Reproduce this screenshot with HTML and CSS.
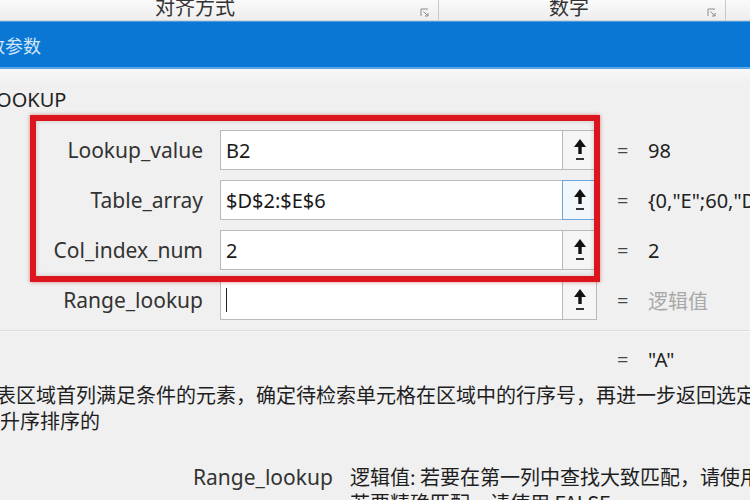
FILE: index.html
```html
<!DOCTYPE html>
<html lang="zh-CN">
<head>
<meta charset="utf-8">
<title>函数参数</title>
<link rel="stylesheet" href="styles.css">
</head>
<body>
<div class="ribbon">
  <div class="rgroup g1">
    <span class="rlabel">对齐方式</span>
    <svg class="launcher" viewBox="0 0 10 10" width="10" height="10"><path d="M1 8V1H8" fill="none" stroke="#8c8c8c" stroke-width="1"/><path d="M3.5 3.5L8 8M8 5V8H5" fill="none" stroke="#8c8c8c" stroke-width="1"/></svg>
  </div>
  <div class="rgroup g2">
    <span class="rlabel">数字</span>
    <svg class="launcher" viewBox="0 0 10 10" width="10" height="10"><path d="M1 8V1H8" fill="none" stroke="#8c8c8c" stroke-width="1"/><path d="M3.5 3.5L8 8M8 5V8H5" fill="none" stroke="#8c8c8c" stroke-width="1"/></svg>
  </div>
  <div class="rgroup g3"></div>
</div>

<div class="titlebar"><span class="title">函数参数</span></div>

<div class="dialog">
  <div class="fname">VLOOKUP</div>

  <div class="args">
    <div class="row">
      <span class="lbl">Lookup_value</span>
      <div class="box"><span class="val">B2</span></div>
      <div class="pick"><svg viewBox="0 0 14 26" width="14" height="26"><path d="M7 2L1 10H5.3V17H8.7V10H13Z" fill="#111"/><rect x="3" y="21" width="8" height="2" fill="#333"/></svg></div>
      <span class="eq">=</span>
      <span class="res">98</span>
    </div>
    <div class="row">
      <span class="lbl">Table_array</span>
      <div class="box"><span class="val">$D$2:$E$6</span></div>
      <div class="pick focus"><svg viewBox="0 0 14 26" width="14" height="26"><path d="M7 2L1 10H5.3V17H8.7V10H13Z" fill="#111"/><rect x="3" y="21" width="8" height="2" fill="#333"/></svg></div>
      <span class="eq">=</span>
      <span class="res">{0,"E";60,"D";70,"C";80,"B";90,"A"}</span>
    </div>
    <div class="row">
      <span class="lbl">Col_index_num</span>
      <div class="box"><span class="val">2</span></div>
      <div class="pick"><svg viewBox="0 0 14 26" width="14" height="26"><path d="M7 2L1 10H5.3V17H8.7V10H13Z" fill="#111"/><rect x="3" y="21" width="8" height="2" fill="#333"/></svg></div>
      <span class="eq">=</span>
      <span class="res">2</span>
    </div>
    <div class="row">
      <span class="lbl">Range_lookup</span>
      <div class="box"><span class="caret"></span></div>
      <div class="pick"><svg viewBox="0 0 14 26" width="14" height="26"><path d="M7 2L1 10H5.3V17H8.7V10H13Z" fill="#111"/><rect x="3" y="21" width="8" height="2" fill="#333"/></svg></div>
      <span class="eq">=</span>
      <span class="res muted">逻辑值</span>
    </div>
    <div class="highlight"></div>
  </div>

  <div class="sep"></div>

  <div class="result"><span class="eq">=</span><span class="res">"A"</span></div>

  <div class="desc">
    <div class="dline first">搜索表区域首列满足条件的元素，确定待检索单元格在区域中的行序号，再进一步返回选定单元格的值。默认情况下，表是以</div>
    <div class="dline">升序排序的</div>
  </div>

  <div class="argdesc">
    <span class="alabel">Range_lookup</span>
    <div class="atext">
      <div class="aline">逻辑值: 若要在第一列中查找大致匹配，请使用 TRUE 或省略；</div>
      <div class="aline">若要精确匹配，请使用 FALSE</div>
    </div>
  </div>
</div>
</body>
</html>
```
FILE: styles.css
```css
html, body {
  margin: 0;
  padding: 0;
}
body {
  width: 750px;
  height: 500px;
  overflow: hidden;
  background: #f0f0f0;
  font-family: "Noto Sans", "Noto Sans CJK SC", sans-serif;
  color: #222;
}

/* ribbon strip */
.ribbon {
  height: 21px;
  display: flex;
  background: linear-gradient(#fafafa, #ededed);
  border-bottom: 1px solid #d6d6d6;
  box-sizing: border-box;
  overflow: hidden;
}
.rgroup {
  display: flex;
  align-items: flex-start;
  border-right: 1px solid #c9c9c9;
  box-sizing: border-box;
  flex: none;
}
.g1 { width: 439px; }
.g2 { width: 287px; }
.g3 { flex: 1; border-right: none; }
.rlabel {
  font-family: "Noto Sans CJK SC", sans-serif;
  font-size: 20px;
  line-height: 14px;
  color: #333;
  white-space: nowrap;
}
.g1 .rlabel { margin-left: 155px; }
.g2 .rlabel { margin-left: 110px; }
.launcher {
  margin-left: auto;
  margin-right: 8px;
  margin-top: 8px;
}

/* blue title bar */
.titlebar {
  height: 48px;
  background: #0a77d5;
  border-top: 1px solid #4a9be0;
  border-bottom: 2px solid #5aa6e6;
  box-sizing: border-box;
  display: flex;
  align-items: center;
  overflow: hidden;
}
.title {
  font-family: "Noto Sans CJK SC", sans-serif;
  font-size: 18px;
  color: #d3e6f8;
  margin-left: -31px;
  white-space: nowrap;
}

/* dialog body */
.dialog {
  padding-top: 19px;
  background: linear-gradient(#f8f8f8 0, #f0f0f0 14px);
}
.fname {
  font-size: 20px;
  line-height: 24px;
  height: 24px;
  margin-left: -26px;
  color: #222;
}

.args {
  position: relative;
  margin-top: 18px;
  display: flex;
  flex-direction: column;
  gap: 10px;
}
.row {
  display: flex;
  align-items: center;
  height: 40px;
  font-size: 20px;
}
.lbl {
  width: 203px;
  flex: none;
  text-align: right;
  color: #333;
  font-size: 21px;
  white-space: nowrap;
}
.box {
  flex: none;
  margin-left: 17px;
  width: 342px;
  height: 40px;
  box-sizing: border-box;
  border: 1px solid #b9b9b9;
  border-right: none;
  background: #fff;
  padding-left: 5px;
  display: flex;
  align-items: center;
}
.val {
  color: #1a1a1a;
  white-space: nowrap;
}
.caret {
  width: 1px;
  height: 24px;
  background: #222;
}
.pick {
  flex: none;
  width: 35px;
  height: 40px;
  box-sizing: border-box;
  border: 1px solid #b9b9b9;
  background: #f5f5f5;
  display: flex;
  align-items: center;
  justify-content: center;
}
.pick.focus {
  border-color: #6aa6de;
  background: #f2f7fc;
}
.eq {
  flex: none;
  width: 31px;
  margin-left: 20px;
  color: #444;
}
.res {
  white-space: nowrap;
  color: #222;
}
.res.muted {
  font-family: "Noto Sans CJK SC", sans-serif;
  color: #a8a8a8;
}

/* red annotation frame over the first three arguments */
.highlight {
  position: absolute;
  left: 30px;
  top: -15px;
  width: 570px;
  height: 167px;
  box-sizing: border-box;
  border: 6px solid #db141d;
  box-shadow: 0 0 4px rgba(180, 0, 0, 0.45), inset 0 0 5px rgba(0, 0, 0, 0.18);
  pointer-events: none;
}

.sep {
  margin-top: 10px;
  height: 0;
  border-top: 1px solid #dddddd;
  border-bottom: 1px solid #f7f7f7;
}

.result {
  margin-top: 16px;
  display: flex;
  font-size: 20px;
  line-height: 24px;
  padding-left: 597px;
}

.desc {
  margin-top: 10px;
  font-family: "Noto Sans CJK SC", sans-serif;
  font-size: 20px;
  line-height: 26px;
  color: #1e1e1e;
}
.dline {
  white-space: nowrap;
}
.dline.first {
  margin-left: -44px;
}

.argdesc {
  margin-top: 30px;
  display: flex;
  font-size: 20px;
  line-height: 26px;
}
.alabel {
  flex: none;
  margin-left: 193px;
  width: 157px;
  color: #333;
  font-size: 21px;
  white-space: nowrap;
}
.atext {
  font-family: "Noto Sans CJK SC", sans-serif;
  color: #1e1e1e;
}
.aline {
  white-space: nowrap;
}
```
